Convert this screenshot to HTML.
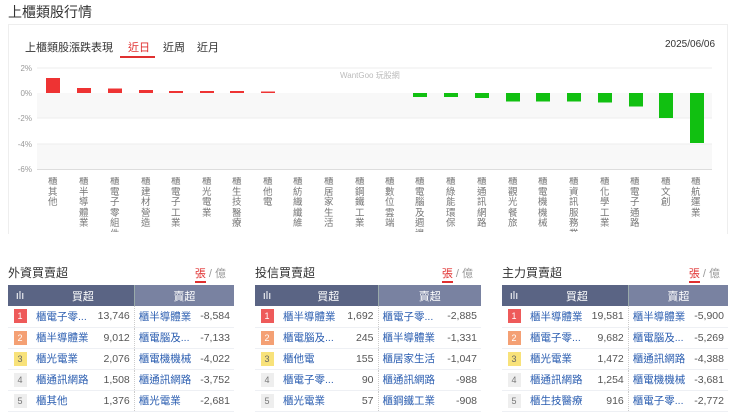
<!DOCTYPE html>
<html><head><meta charset="utf-8"><style>
*{margin:0;padding:0;box-sizing:border-box}
body{width:740px;height:418px;background:#fff;font-family:"Liberation Sans","Noto Sans CJK TC",sans-serif;color:#333;position:relative;overflow:hidden}
.abs{position:absolute}
.h1{left:8px;top:2px;font-size:14px;color:#333}
.card{left:8px;top:24px;width:720px;height:210px;border:1px solid #eee;border-bottom:none}
.t{font-size:11px}
.panel{position:absolute;top:263px;width:226px}
.ptitle{font-size:12px;color:#333;height:22px;line-height:20px}
.unit{position:absolute;right:8px;top:2px;font-size:11px;color:#999}
.unit b{font-weight:normal;color:#e03030;border-bottom:2px solid #e03030;padding-bottom:1px}
table{border-collapse:collapse;width:226px;font-size:10.5px}
th{height:21px;color:#fff;font-weight:normal;font-size:11px}
th.a{background:#5a6484}th.b{background:#7982a1;border-left:1px solid #9aa}
td{height:21px;border-bottom:1px solid #eef0f4}
td.n{width:24px;text-align:center}
td.n span{display:inline-block;width:13px;height:14px;line-height:14px;font-size:9px;color:#fff}
.r1{background:#ee5a5a}.r2{background:#f4a074}.r3{background:#f8e27a;color:#666!important}.r4,.r5{background:#eee;color:#777!important}
td.nm{color:#2a5db0;padding-left:4px}
td.v{text-align:right;padding-right:4px;color:#555}
td.nm2{color:#2a5db0;padding-left:4px;border-left:1px dotted #ccc}
.lb div{position:absolute;width:11px;word-break:break-all}
</style></head><body>
<div class="abs h1">上櫃類股行情</div>
<div class="abs card"></div>
<div class="abs t" style="left:25px;top:39px;font-size:11px;color:#333">上櫃類股漲跌表現</div>
<div class="abs t" style="left:128px;top:39px;color:#e03030">近日</div>
<div class="abs" style="left:120px;top:56px;width:35px;height:2px;background:#e03030"></div>
<div class="abs t" style="left:163px;top:39px">近周</div>
<div class="abs t" style="left:197px;top:39px">近月</div>
<div class="abs t" style="left:665px;top:39px;font-size:10px">2025/06/06</div>
<svg class="abs" style="left:0;top:0" width="740" height="240" font-family="Liberation Sans,Noto Sans CJK TC,sans-serif">
<rect x="37" y="93" width="675" height="25" fill="#f8f8f8"/>
<rect x="37" y="144" width="675" height="25" fill="#f8f8f8"/>
<g stroke="#eee"><line x1="37" y1="68" x2="712" y2="68"/><line x1="37" y1="118" x2="712" y2="118"/><line x1="37" y1="144" x2="712" y2="144"/></g>
<line x1="37" y1="169.5" x2="712" y2="169.5" stroke="#ddd"/>
<g font-size="8" fill="#999" text-anchor="end"><text x="32" y="71">2%</text><text x="32" y="96">0%</text><text x="32" y="121">-2%</text><text x="32" y="147">-4%</text><text x="32" y="172">-6%</text></g>
<text x="340" y="78" font-size="8" fill="#bbb">WantGoo 玩股網</text>
<g fill="#ee3333">
<rect x="46" y="78" width="14" height="15"/><rect x="77" y="88" width="14" height="5"/><rect x="108" y="88.5" width="14" height="4.5"/><rect x="139" y="90" width="14" height="3"/><rect x="169" y="91" width="14" height="2"/><rect x="200" y="91" width="14" height="2"/><rect x="230" y="91" width="14" height="2"/><rect x="261" y="91.5" width="14" height="1.5"/>
</g>
<g fill="#11c011">
<rect x="413" y="93" width="14" height="4"/><rect x="444" y="93" width="14" height="4"/><rect x="475" y="93" width="14" height="5"/><rect x="506" y="93" width="14" height="8.5"/><rect x="536" y="93" width="14" height="8.5"/><rect x="567" y="93" width="14" height="8.5"/><rect x="598" y="93" width="14" height="9.5"/><rect x="629" y="93" width="14" height="13.5"/><rect x="659" y="93" width="14" height="25"/><rect x="690" y="93" width="14" height="50"/>
</g>
</svg>
<div class="abs lb" style="left:0;top:177px;width:740px;height:55px;overflow:hidden;font-size:9.5px;color:#777;line-height:10.5px">
<div style="left:48px">櫃其他</div>
<div style="left:79px">櫃半導體業</div>
<div style="left:110px">櫃電子零組件業</div>
<div style="left:141px">櫃建材營造</div>
<div style="left:171px">櫃電子工業</div>
<div style="left:202px">櫃光電業</div>
<div style="left:232px">櫃生技醫療</div>
<div style="left:263px">櫃他電</div>
<div style="left:293px">櫃紡織纖維</div>
<div style="left:324px">櫃居家生活</div>
<div style="left:355px">櫃鋼鐵工業</div>
<div style="left:385px">櫃數位雲端</div>
<div style="left:415px">櫃電腦及週邊設備</div>
<div style="left:446px">櫃綠能環保</div>
<div style="left:477px">櫃通訊網路</div>
<div style="left:508px">櫃觀光餐旅</div>
<div style="left:538px">櫃電機機械</div>
<div style="left:569px">櫃資訊服務業</div>
<div style="left:600px">櫃化學工業</div>
<div style="left:630px">櫃電子通路</div>
<div style="left:661px">櫃文創</div>
<div style="left:691px">櫃航運業</div>
</div>

<div class="panel" style="left:8px">
<div class="ptitle">外資買賣超</div><div class="unit"><b>張</b> / 億</div>
<table><tr><th class="a" style="width:24px">ılı</th><th class="a" colspan="2">買超</th><th class="b" colspan="2">賣超</th></tr>
<tr><td class="n"><span class="r1">1</span></td><td class="nm">櫃電子零...</td><td class="v">13,746</td><td class="nm2">櫃半導體業</td><td class="v">-8,584</td></tr>
<tr><td class="n"><span class="r2">2</span></td><td class="nm">櫃半導體業</td><td class="v">9,012</td><td class="nm2">櫃電腦及...</td><td class="v">-7,133</td></tr>
<tr><td class="n"><span class="r3">3</span></td><td class="nm">櫃光電業</td><td class="v">2,076</td><td class="nm2">櫃電機機械</td><td class="v">-4,022</td></tr>
<tr><td class="n"><span class="r4">4</span></td><td class="nm">櫃通訊網路</td><td class="v">1,508</td><td class="nm2">櫃通訊網路</td><td class="v">-3,752</td></tr>
<tr><td class="n"><span class="r5">5</span></td><td class="nm">櫃其他</td><td class="v">1,376</td><td class="nm2">櫃光電業</td><td class="v">-2,681</td></tr></table></div>

<div class="panel" style="left:255px">
<div class="ptitle">投信買賣超</div><div class="unit"><b>張</b> / 億</div>
<table><tr><th class="a" style="width:24px">ılı</th><th class="a" colspan="2">買超</th><th class="b" colspan="2">賣超</th></tr>
<tr><td class="n"><span class="r1">1</span></td><td class="nm">櫃半導體業</td><td class="v">1,692</td><td class="nm2">櫃電子零...</td><td class="v">-2,885</td></tr>
<tr><td class="n"><span class="r2">2</span></td><td class="nm">櫃電腦及...</td><td class="v">245</td><td class="nm2">櫃半導體業</td><td class="v">-1,331</td></tr>
<tr><td class="n"><span class="r3">3</span></td><td class="nm">櫃他電</td><td class="v">155</td><td class="nm2">櫃居家生活</td><td class="v">-1,047</td></tr>
<tr><td class="n"><span class="r4">4</span></td><td class="nm">櫃電子零...</td><td class="v">90</td><td class="nm2">櫃通訊網路</td><td class="v">-988</td></tr>
<tr><td class="n"><span class="r5">5</span></td><td class="nm">櫃光電業</td><td class="v">57</td><td class="nm2">櫃鋼鐵工業</td><td class="v">-908</td></tr></table></div>

<div class="panel" style="left:502px">
<div class="ptitle">主力買賣超</div><div class="unit"><b>張</b> / 億</div>
<table><tr><th class="a" style="width:24px">ılı</th><th class="a" colspan="2">買超</th><th class="b" colspan="2">賣超</th></tr>
<tr><td class="n"><span class="r1">1</span></td><td class="nm">櫃半導體業</td><td class="v">19,581</td><td class="nm2">櫃半導體業</td><td class="v">-5,900</td></tr>
<tr><td class="n"><span class="r2">2</span></td><td class="nm">櫃電子零...</td><td class="v">9,682</td><td class="nm2">櫃電腦及...</td><td class="v">-5,269</td></tr>
<tr><td class="n"><span class="r3">3</span></td><td class="nm">櫃光電業</td><td class="v">1,472</td><td class="nm2">櫃通訊網路</td><td class="v">-4,388</td></tr>
<tr><td class="n"><span class="r4">4</span></td><td class="nm">櫃通訊網路</td><td class="v">1,254</td><td class="nm2">櫃電機機械</td><td class="v">-3,681</td></tr>
<tr><td class="n"><span class="r5">5</span></td><td class="nm">櫃生技醫療</td><td class="v">916</td><td class="nm2">櫃電子零...</td><td class="v">-2,772</td></tr></table></div>
</body></html>
